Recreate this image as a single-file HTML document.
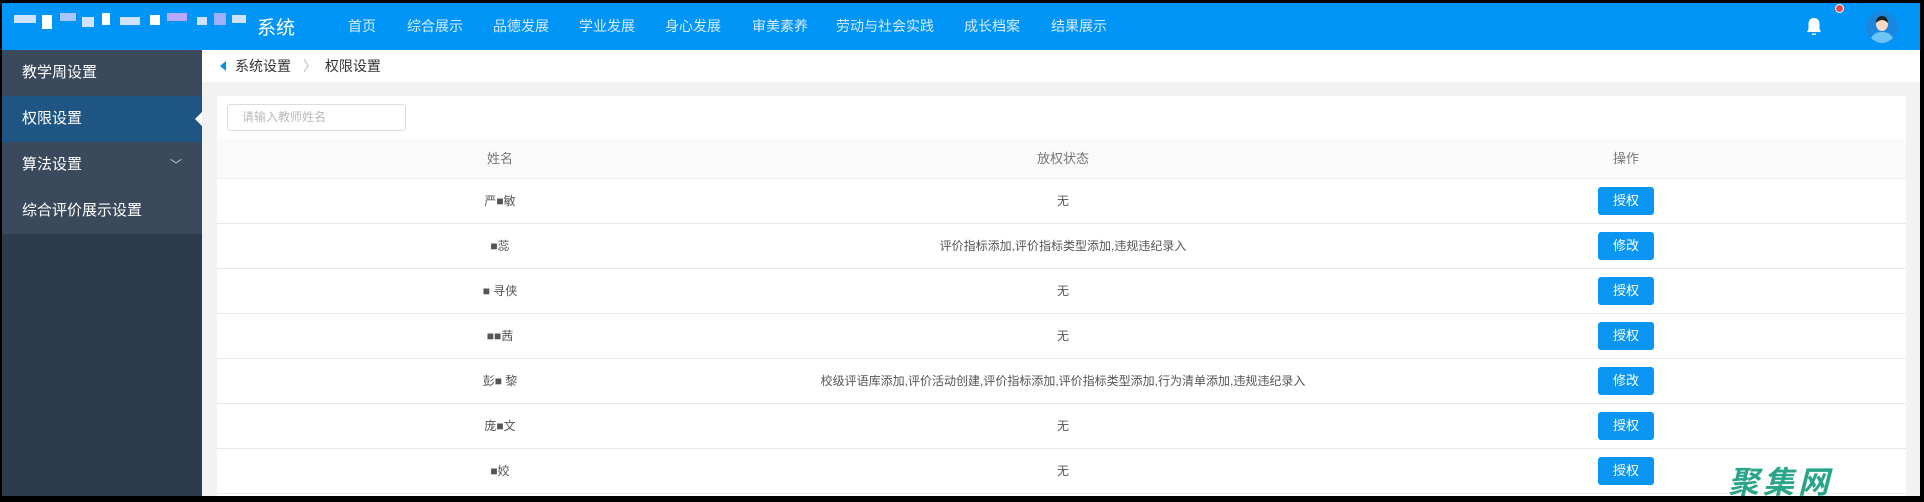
<!DOCTYPE html>
<html><head><meta charset="utf-8"><style>
*{margin:0;padding:0;box-sizing:border-box}
body{width:1924px;height:499px;background:#000;position:relative;overflow:hidden;font-family:"Liberation Sans","Noto Sans CJK SC",sans-serif}
.hdr{position:absolute;left:2px;top:3px;width:1918px;height:47px;background:#0095f7}
.nav{position:absolute;top:13px;color:#d6ecff;font-size:14px}
.side{position:absolute;left:2px;top:50px;width:200px;height:446px;background:#2d3c4c}
.si{height:46px;line-height:46px;padding-left:20px;color:#fff;font-size:15px;background:#3a4a5c;position:relative}
.si.act{background:#1f5583}
.main{position:absolute;left:202px;top:50px;width:1718px;height:446px;background:#f2f2f2}
.bc{height:32px;background:#fff;font-size:14px;color:#333;line-height:32px;padding-left:33px}
.card{position:absolute;left:15px;top:46px;width:1689px;height:400px;background:#fff}
.inp{position:absolute;left:10px;top:8px;width:179px;height:27px;border:1px solid #ddd;border-radius:3px;font-size:12px;color:#bbb;line-height:25px;padding-left:14px}
.th{position:absolute;top:43px;left:0;width:1689px;height:40px;background:#fafafa;border-bottom:1px solid #eee;font-size:13px;color:#777}
.row{position:absolute;left:0;width:1689px;height:45px;border-bottom:1px solid #e8e8e8;font-size:12px;color:#555}
.c{position:absolute;top:0;line-height:44px;transform:translateX(-50%);white-space:nowrap}
.btn{position:absolute;left:1381px;top:8px;width:56px;height:28px;background:#0a96f2;border-radius:3px;color:#fff;font-size:13px;text-align:center;line-height:28px}
.g{position:absolute;background:#cfe2ff}
</style></head><body>
<div class="hdr">
<div class="g" style="left:12px;top:12px;width:22px;height:8px"></div>
<div class="g" style="left:40px;top:12px;width:10px;height:14px;background:#fff"></div>
<div class="g" style="left:58px;top:10px;width:16px;height:8px;background:#a9c6ff"></div>
<div class="g" style="left:80px;top:14px;width:12px;height:10px"></div>
<div class="g" style="left:100px;top:10px;width:8px;height:12px;background:#fff"></div>
<div class="g" style="left:118px;top:14px;width:20px;height:8px"></div>
<div class="g" style="left:148px;top:12px;width:10px;height:10px;background:#fff"></div>
<div class="g" style="left:165px;top:10px;width:20px;height:8px;background:#b8a8ff"></div>
<div class="g" style="left:195px;top:14px;width:10px;height:8px"></div>
<div class="g" style="left:212px;top:10px;width:12px;height:12px;background:#9fb0ff"></div>
<div class="g" style="left:230px;top:12px;width:14px;height:8px"></div>
<div style="position:absolute;left:255px;top:10px;color:#fff;font-size:19px">系统</div>
<div class="nav" style="left:346px">首页</div>
<div class="nav" style="left:405px">综合展示</div>
<div class="nav" style="left:491px">品德发展</div>
<div class="nav" style="left:577px">学业发展</div>
<div class="nav" style="left:663px">身心发展</div>
<div class="nav" style="left:750px">审美素养</div>
<div class="nav" style="left:834px">劳动与社会实践</div>
<div class="nav" style="left:962px">成长档案</div>
<div class="nav" style="left:1049px">结果展示</div>
<svg style="position:absolute;left:1803px;top:14px" width="18" height="20" viewBox="0 0 18 20"><path d="M9 1C5 1 3.5 4 3.5 7v5L2 15h14l-1.5-3V7C14.5 4 13 1 9 1z" fill="#fff"/><rect x="7" y="16.5" width="4" height="1.5" fill="#fff"/></svg>
<div style="position:absolute;left:1833px;top:1px;width:9px;height:9px;border-radius:50%;background:#f04848;border:1px solid #fff"></div>
<svg style="position:absolute;left:1864px;top:8px" width="32" height="32" viewBox="0 0 32 32"><circle cx="16" cy="16" r="16" fill="#1a88e0"/><path d="M5 27c3-5 7-6 11-6s8 1 11 6c-3 3-7 5-11 5s-8-2-11-5z" fill="#6cc3f5"/><ellipse cx="16" cy="13" rx="6" ry="7" fill="#fbd9c6"/><path d="M10 12c0-5 3-7 6-7s6 2 6 7c-2-2-4-3-6-3s-4 1-6 3z" fill="#222"/></svg>
</div>
<div class="side">
<div class="si">教学周设置</div>
<div class="si act">权限设置<span style="position:absolute;right:0;top:16px;border:7px solid transparent;border-right-color:#fff;border-left:0"></span></div>
<div class="si">算法设置<span style="position:absolute;right:20px;top:0;font-size:12px;color:#ccc">﹀</span></div>
<div class="si">综合评价展示设置</div>
</div>
<div class="main">
<div class="bc"><span style="position:absolute;left:18px;top:11px;border:5px solid transparent;border-right-color:#0a8ee8;border-left:0;border-width:5px 6px 5px 0"></span>系统设置 <span style="color:#bbb;margin:0 8px">〉</span>权限设置</div>
<div class="card">
<div class="inp">请输入教师姓名</div>
<div class="th"><span class="c" style="left:283px;line-height:40px">姓名</span><span class="c" style="left:846px;line-height:40px">放权状态</span><span class="c" style="left:1409px;line-height:40px">操作</span></div>
<div class="row" style="top:83px"><span class="c" style="left:283px">严■敏</span><span class="c" style="left:846px">无</span><div class="btn">授权</div></div>
<div class="row" style="top:128px"><span class="c" style="left:283px">■蕊</span><span class="c" style="left:846px">评价指标添加,评价指标类型添加,违规违纪录入</span><div class="btn">修改</div></div>
<div class="row" style="top:173px"><span class="c" style="left:283px">■ 寻侠</span><span class="c" style="left:846px">无</span><div class="btn">授权</div></div>
<div class="row" style="top:218px"><span class="c" style="left:283px">■■茜</span><span class="c" style="left:846px">无</span><div class="btn">授权</div></div>
<div class="row" style="top:263px"><span class="c" style="left:283px">彭■ 黎</span><span class="c" style="left:846px">校级评语库添加,评价活动创建,评价指标添加,评价指标类型添加,行为清单添加,违规违纪录入</span><div class="btn">修改</div></div>
<div class="row" style="top:308px"><span class="c" style="left:283px">庞■文</span><span class="c" style="left:846px">无</span><div class="btn">授权</div></div>
<div class="row" style="top:353px"><span class="c" style="left:283px">■姣</span><span class="c" style="left:846px">无</span><div class="btn">授权</div></div>
</div>
<div style="position:absolute;left:1526px;top:407px;font-size:31px;font-weight:bold;font-style:italic;color:#2aa58a;letter-spacing:4px">聚集网</div>
</div>
</body></html>
